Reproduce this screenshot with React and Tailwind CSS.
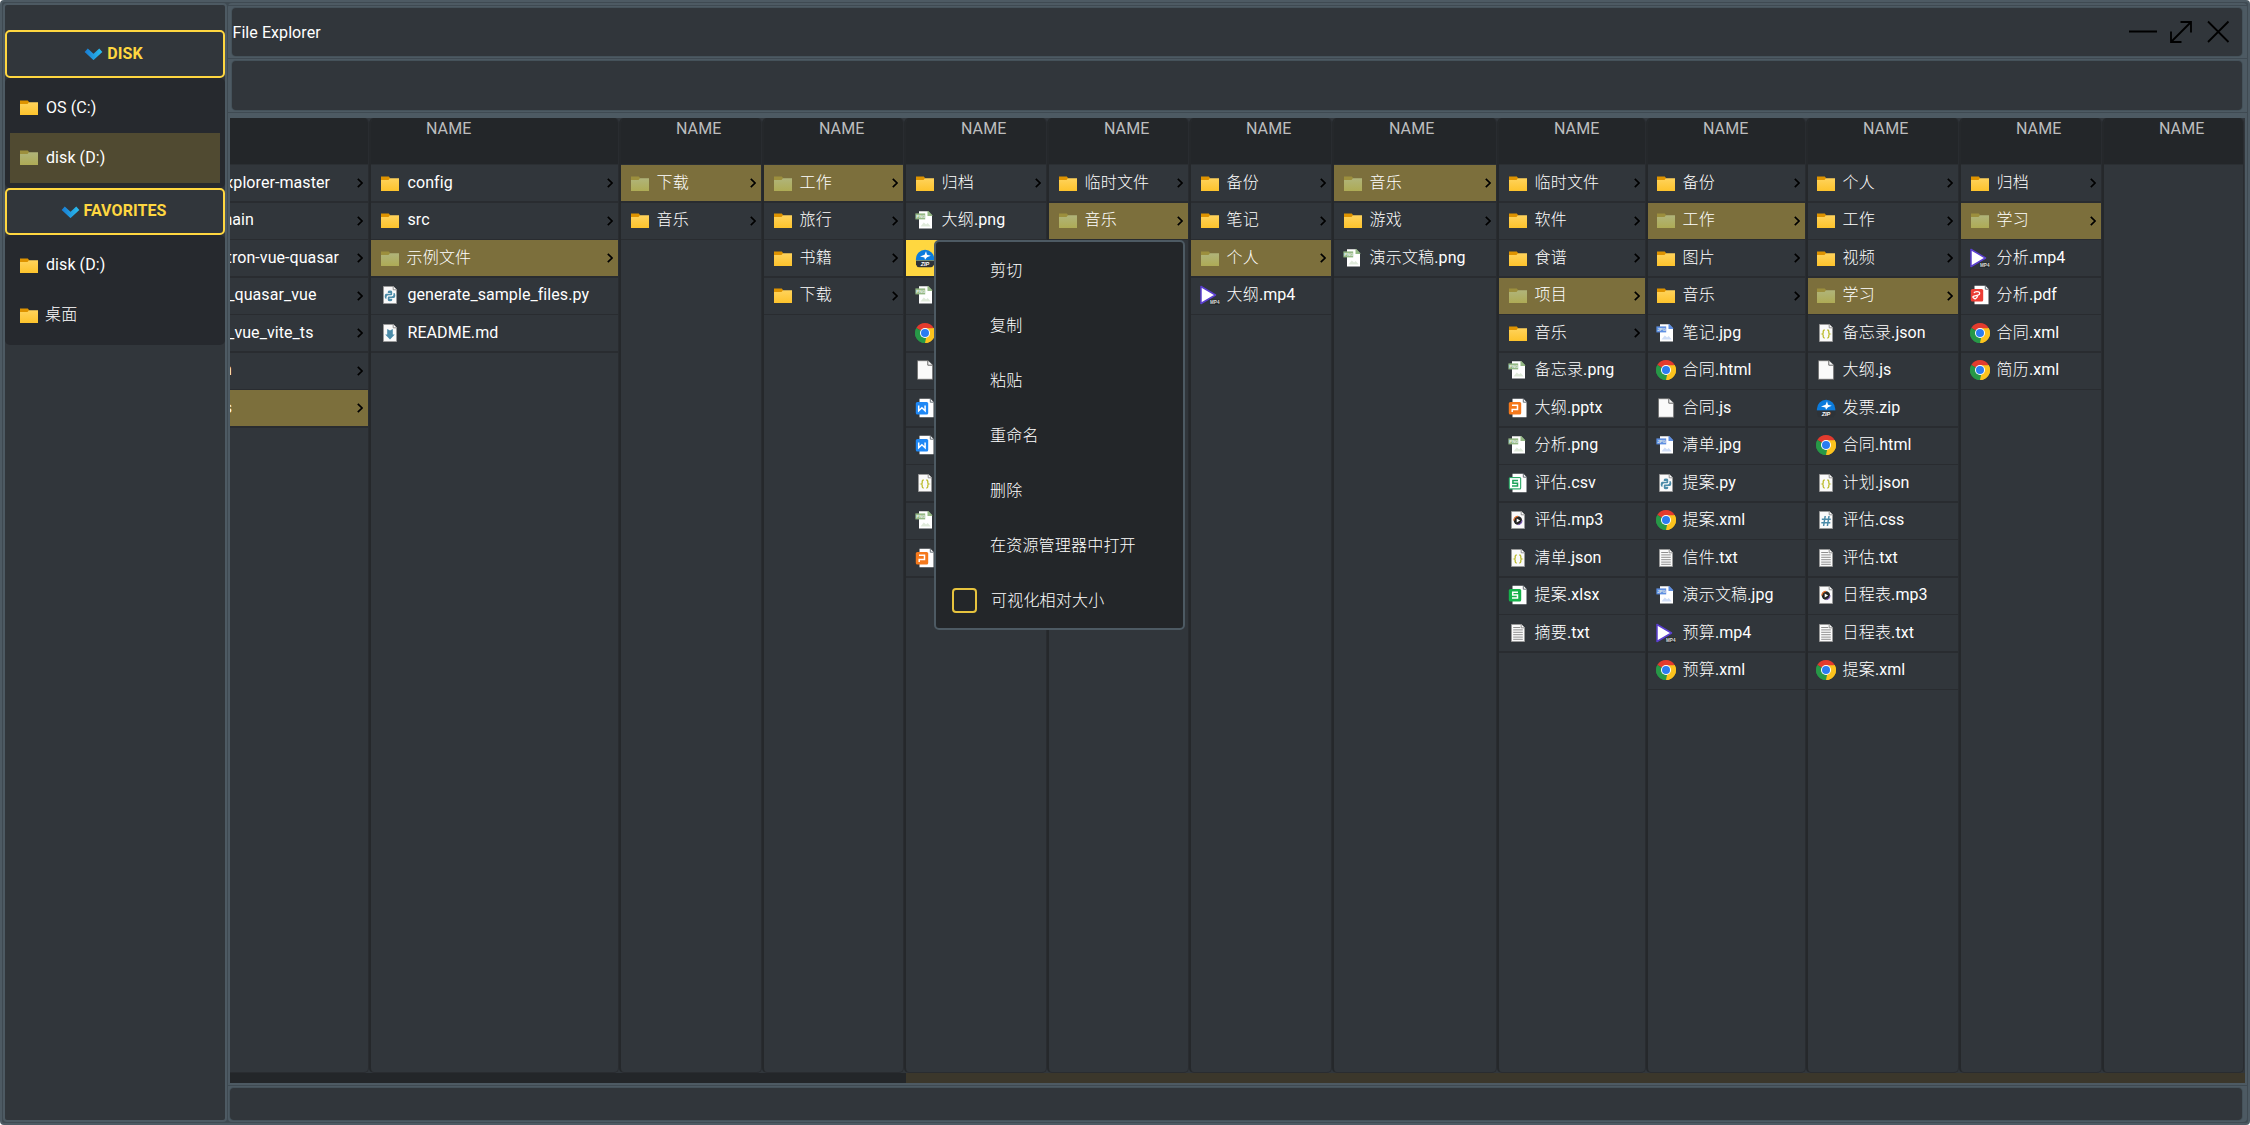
import React from "react";

const FOLDER = "dir";

/* w is the full width of each column, its borders included */
const COLUMNS = [
  { w: 250, rows: ["D:config", "D:src", "*D:示例文件", "py:generate_sample_files.py", "md:README.md"] },
  { w: 143, rows: ["*D:下载", "D:音乐"] },
  { w: 142, rows: ["*D:工作", "D:旅行", "D:书籍", "D:下载"] },
  { w: 143, rows: ["D:归档", "png:大纲.png", "!zip:", "png:", "chrome:", "js:", "doc:", "doc:", "json:", "png:", "ppt:"] },
  { w: 142, rows: ["D:临时文件", "*D:音乐"] },
  { w: 143, rows: ["D:备份", "D:笔记", "*D:个人", "mp4:大纲.mp4"] },
  { w: 165, rows: ["*D:音乐", "D:游戏", "png:演示文稿.png"] },
  {
    w: 149,
    rows: ["D:临时文件", "D:软件", "D:食谱", "*D:项目", "D:音乐", "png:备忘录.png", "ppt:大纲.pptx", "png:分析.png", "csv:评估.csv", "mp3:评估.mp3", "json:清单.json", "xls:提案.xlsx", "txt:摘要.txt"],
  },
  {
    w: 160,
    tight: true,
    rows: ["D:备份", "*D:工作", "D:图片", "D:音乐", "jpg:笔记.jpg", "chrome:合同.html", "js:合同.js", "jpg:清单.jpg", "py:提案.py", "chrome:提案.xml", "txt:信件.txt", "jpg:演示文稿.jpg", "mp4:预算.mp4", "chrome:预算.xml"],
  },
  {
    w: 153,
    tight: true,
    rows: ["D:个人", "D:工作", "D:视频", "*D:学习", "json:备忘录.json", "js:大纲.js", "zip:发票.zip", "chrome:合同.html", "json:计划.json", "css:评估.css", "txt:评估.txt", "mp3:日程表.mp3", "txt:日程表.txt", "chrome:提案.xml"],
  },
  { w: 143, rows: ["D:归档", "*D:学习", "mp4:分析.mp4", "pdf:分析.pdf", "chrome:合同.xml", "chrome:简历.xml"] },
  { w: 142, rows: [] },
];

/* the first column is scrolled partly out of view: [text, right edge of the text] */
const CLIPPED = [
  ["explorer-master", 100],
  ["main", 24],
  ["tron-vue-quasar", 109],
  ["_quasar_vue", 86.5],
  ["_vue_vite_ts", 83.5],
  ["n", 2],
  ["s", 2],
];

const MENU = ["剪切", "复制", "粘贴", "重命名", "删除", "在资源管理器中打开"];

function OfficePage({ color, children }) {
  return (
    <>
      <path d="M4.5.8h11l3 3.2v15.2h-14z" fill="#fff" />
      <path d="M15.3.8v3.4h3.2" fill="none" stroke="#59636b" strokeWidth="0.9" />
      <rect x=".8" y="4" width="12.4" height="12.4" rx="1.5" fill={color} />
      {children}
    </>
  );
}

function ImagePage({ main, label }) {
  return (
    <>
      <path d="M4 1.2h9l4 4.2v13H4z" fill="#fff" />
      <path d="M12.5 1h.8L17.2 5v1h-4.7z" fill={main} />
      <path d="M5.500 16.500l3.300-4 2.300 2 1.600-1.600 3 3.600z" fill={main} opacity=".3" />
      <rect x=".4" y="3.4" width="9.8" height="6" fill={main} />
      <text x="1.3" y="7.9" fontSize="4.3" fontFamily="Liberation Sans, sans-serif" fontWeight="bold" fill="#e8f0ea" letterSpacing="0">
        {label}
      </text>
    </>
  );
}

function SmallPage({ children }) {
  return (
    <>
      <path d="M3.500 1.500h10l3 3v14h-13z" fill="#fafafa" stroke="#9a9a9a" strokeWidth="0.9" />
      <path d="M13.200 1.500v3.300h3.300" fill="#fff" stroke="#777" strokeWidth="0.8" />
      {children}
    </>
  );
}

function Glyph({ type, dim }) {
  switch (type) {
    case FOLDER:
      return dim ? (
        <>
          <path d="M1 3.500h7.800L10 5v4H1z" fill="#9c8f3d" />
          <path d="M1 7h7.500l1.500-1.700h9V18H1z" fill="url(#folderDim)" />
        </>
      ) : (
        <>
          <path d="M1 3.500h7.800L10 5v4H1z" fill="#de9300" />
          <path d="M1 7h7.500l1.500-1.700h9V18H1z" fill="url(#folder)" />
        </>
      );
    case "png":
      return <ImagePage main="#94b884" label="PNG" />;
    case "jpg":
      return <ImagePage main="#5f8fe2" label="JPG" />;
    case "js":
      return (
        <>
          <path d="M2.500.700h10.500L17.600 5v14.300H2.500z" fill="#fafafa" stroke="#6f6f6f" strokeWidth="0.8" />
          <path d="M12.800.700v4.500h4.600" fill="#fafafa" stroke="#555" strokeWidth="0.9" />
        </>
      );
    case "json":
      return (
        <SmallPage>
          <path d="M8.700 7q-1.500 0-1.500 1.500v1.200q0 1-.9 1.300.9.300.9 1.300v1.200q0 1.500 1.500 1.500M11.300 7q1.500 0 1.500 1.500v1.200q0 1 .9 1.300-.9.300-.9 1.300v1.200q0 1.500-1.500 1.500" fill="none" stroke="#bcbc2e" strokeWidth="1.3" />
        </SmallPage>
      );
    case "py":
      return (
        <SmallPage>
          <path d="M7.800 6.700q0-1.200 2.200-1.200t2.200 1.200v2.600q0 1-1 1H8.500q-2 0-2 2v1.500H6q-1.300 0-1.300-2.400T6 8.700h4.500V8H7.800z" fill="#4b8ba8" />
          <path d="M12.200 15.100q0 1.200-2.200 1.200t-2.200-1.200v-2.600q0-1 1-1h2.700q2 0 2-2V8h.5q1.300 0 1.300 2.400t-1.300 2.700H9.500v.7h2.700z" fill="#4b8ba8" />
        </SmallPage>
      );
    case "md":
      return (
        <SmallPage>
          <path d="M7.200 6l2.800 1.500L12.800 6v5.500h2L10 16.500 5.200 11.500h2z" fill="#4b8ba8" />
        </SmallPage>
      );
    case "css":
      return (
        <SmallPage>
          <path d="M9.200 6l-1.600 10M13 6l-1.600 10M5.800 9.300h9M5.300 12.700h9" fill="none" stroke="#4b8ba8" strokeWidth="1.5" />
        </SmallPage>
      );
    case "txt":
      return (
        <SmallPage>
          <path d="M5.200 4.500h7M5.200 6.900h9.600M5.200 9.300h9.600M5.200 11.700h9.600M5.200 14.100h9.600M5.200 16.300h9.600" stroke="#8f8f8f" strokeWidth="1" />
        </SmallPage>
      );
    case "mp3":
      return (
        <SmallPage>
          <circle cx="9.9" cy="10.5" r="4.200" fill="#222" />
          <path d="M5.900 10.500a4 4 0 0 1 4-4.100" fill="none" stroke="#e8722c" strokeWidth="1.3" />
          <path d="M9.900 14.600a4 4 0 0 0 4-4.100" fill="none" stroke="#7b5bb5" strokeWidth="1.3" />
          <path d="M8.700 8.400l3.400 2.100-3.400 2.100z" fill="#fff" />
        </SmallPage>
      );
    case "chrome":
      return (
        <>
          <path d="M10 10L1.340 5A10 10 0 0 1 18.660 5z" fill="#e33b2e" />
          <path d="M10 10L18.660 5A10 10 0 0 1 10 20z" fill="#fcc31e" />
          <path d="M10 10V20A10 10 0 0 1 1.340 5z" fill="#279847" />
          <path d="M10 5.200h8.770A10 10 0 0 1 10 20l4.200-7.600z" fill="#fcc31e" />
          <path d="M1.340 5l4.500 7.400 5.200 2.500L10 20A10 10 0 0 1 1.340 5z" fill="#279847" />
          <circle cx="10" cy="10" r="5" fill="#fff" />
          <circle cx="10" cy="10" r="4" fill="#2b7cf0" />
        </>
      );
    case "zip":
      return (
        <>
          <path d="M.9 11a9.200 9.200 0 0 1 18.400 0v1.500H.9z" fill="#0b7bdc" />
          <path d="M11 3.200l1 3.600 3.800 1-3.800 1.400-2 2.600-.6-2.400L5 8.600l4.600-1.800z" fill="#fff" />
          <path d="M1 12.800h18.300v3.600q-1.500 2.600-3.500 2.800H4.500Q1.500 19 1 16.400z" fill="#2e3338" />
          <text x="10" y="18" textAnchor="middle" fontSize="5.6" fontStyle="italic" fontWeight="bold" fontFamily="Liberation Sans, sans-serif" fill="#fff" letterSpacing="0">
            ZIP
          </text>
        </>
      );
    case "mp4":
      return (
        <>
          <path d="M1 1.500v17L15.500 10z" fill="#fff" stroke="#5b3fd0" strokeWidth="1.5" strokeLinejoin="round" />
          <rect x="9.5" y="14.6" width="10.5" height="5" fill="#24282b" />
          <text x="10" y="18.9" fontSize="4.6" fontWeight="bold" fontFamily="Liberation Sans, sans-serif" fill="#ddd" letterSpacing="0">
            MP4
          </text>
        </>
      );
    case "doc":
      return (
        <OfficePage color="#1f88f5">
          <path d="M3.700 7.500v5.300l3.200-3 3.200 3V7.500" fill="none" stroke="#fff" strokeWidth="1.5" />
        </OfficePage>
      );
    case "ppt":
      return (
        <OfficePage color="#f5791c">
          <path d="M4.200 14v-2.600h5.300V7.200H4" fill="none" stroke="#fff" strokeWidth="1.5" />
        </OfficePage>
      );
    case "xls":
      return (
        <OfficePage color="#16b14b">
          <path d="M10 7.200H4.700v2.900h4.800v3H4" fill="none" stroke="#fff" strokeWidth="1.5" />
        </OfficePage>
      );
    case "csv":
      return (
        <OfficePage color="#2aa866">
          <rect x="1.9" y="5.1" width="10.2" height="10.2" fill="#fff" />
          <path d="M10 7.400H4.900v2.800h4.600V13H4" fill="none" stroke="#1ea45b" strokeWidth="1.5" />
        </OfficePage>
      );
    case "pdf":
      return (
        <OfficePage color="#ec3d35">
          <path d="M4 8q.5-1.300 3-1.300t2.700 1.500-1.700 2-4 .9-.3 2 3-.6l1-1.300" fill="none" stroke="#fff" strokeWidth="1.3" />
        </OfficePage>
      );
    default:
      return null;
  }
}

function Icon({ type, dim }) {
  return (
    <svg className="-mt-px h-5 w-5 shrink-0" viewBox="0 0 20 20">
      <Glyph type={type} dim={dim} />
    </svg>
  );
}

/* Han glyphs are drawn lighter and a little wider than the Latin ones */
function Label({ text }) {
  return (
    <span className="whitespace-nowrap">
      {text.split(/([\u4e00-\u9fff]+)/).map((part, i) =>
        i % 2 ? (
          <span key={i} className="-ml-px font-light tracking-[0.2px]">
            {part}
          </span>
        ) : (
          part
        )
      )}
    </span>
  );
}

function Chevron() {
  return (
    <svg className="mr-[5px] ml-auto h-[10px] w-[6px] shrink-0" viewBox="0 0 6 10">
      <path d="M.8.8L5 5 .8 9.200" fill="none" stroke="#000" strokeWidth="1.7" />
    </svg>
  );
}

function Row({ item, tight }) {
  const flag = item[0] === "*" || item[0] === "!" ? item[0] : "";
  const [kind, name] = item.slice(flag.length).split(":");
  const isDir = kind === "D";
  const bg = flag === "*" ? "bg-[#7c6f3c]" : flag === "!" ? "bg-[#ffd740]" : "bg-[#31363b]";
  return (
    <div className="h-[37.5px] bg-[#292c30]">
      <div className={`flex h-9 items-center ${tight ? "pl-2" : "pl-[9px]"} ${bg}`}>
        <Icon type={isDir ? FOLDER : kind} dim={flag === "*"} />
        <span className="-mt-px ml-[7.5px]">
          <Label text={name} />
        </span>
        {isDir && <Chevron />}
      </div>
    </div>
  );
}

function Column({ w, rows, tight }) {
  return (
    <div
      className="h-full shrink-0 overflow-hidden rounded-[5px] border-r border-b border-l-2 border-r-[#292c30] border-b-[#292c30] border-l-[#25282b] bg-[#31363b]"
      style={{ width: w }}
    >
      <div className="h-[47px] border-b border-[#2b2f33] bg-[#232629] pl-[55px]">
        <span className="block pt-px leading-[19px] text-[#bdbebf]">NAME</span>
      </div>
      {rows.map((r, i) => (
        <Row key={i} item={r} tight={tight} />
      ))}
    </div>
  );
}

function ClippedColumn() {
  return (
    <div className="h-full w-[139px] shrink-0 overflow-hidden rounded-r-[5px] border-r border-b border-[#292c30] bg-[#31363b]">
      <div className="h-[47px] border-b border-[#2b2f33] bg-[#232629]" />
      {CLIPPED.map(([text, end], i) => (
        <div key={i} className="h-[37.5px] bg-[#292c30]">
          <div className={`flex h-9 items-center ${i === 6 ? "bg-[#7c6f3c]" : "bg-[#31363b]"}`}>
            <span className="-mt-px flex shrink-0 justify-end whitespace-nowrap" style={{ width: end }}>
              {text}
            </span>
            <Chevron />
          </div>
        </div>
      ))}
    </div>
  );
}

function Section({ title, items }) {
  return (
    <>
      <div className="flex h-[47.5px] items-center justify-center gap-1 rounded-[5px] border-2 border-[#ffd740] bg-[#31363b] pr-[3px] text-[#ffd740]">
        <svg className="mt-px h-3 w-[19px]" viewBox="0 0 19 12">
          <path d="M2.200 2.300L9.500 9l7.300-6.700" fill="none" stroke="url(#check)" strokeWidth="4.6" />
        </svg>
        <span className="leading-5 font-bold">{title}</span>
      </div>
      <div className="h-[110px] rounded-[5px] bg-[#26292e] p-[5px]">
        {items.map(([name, active], i) => (
          <div key={i} className={`flex h-[50px] items-center pl-[9px] ${active ? "bg-[#504a31]" : ""}`}>
            <Icon type={FOLDER} dim={active} />
            <span className="ml-[7px]">
              <Label text={name} />
            </span>
          </div>
        ))}
      </div>
    </>
  );
}

export default function App() {
  return (
    <div className="flex h-[1125px] w-[2250px] gap-px overflow-hidden rounded-[4px] border-2 border-[#4d5a63] bg-[#3f4a52] p-px font-[Roboto,'Noto_Sans_CJK_SC',sans-serif] text-[16px] leading-5 tracking-[0.07px] text-white">
      <svg className="absolute h-0 w-0">
        <defs>
          <linearGradient id="folder" x1="0" y1="0" x2="0" y2="1">
            <stop offset="0" stopColor="#ffd35c" />
            <stop offset="1" stopColor="#fdc32c" />
          </linearGradient>
          <linearGradient id="folderDim" x1="0" y1="0" x2="0" y2="1">
            <stop offset="0" stopColor="#b0b47a" />
            <stop offset="1" stopColor="#aeab55" />
          </linearGradient>
          <linearGradient id="check" x1="0" y1="0" x2="1" y2="0">
            <stop offset="0" stopColor="#1a80d4" />
            <stop offset="1" stopColor="#29b9ec" />
          </linearGradient>
        </defs>
      </svg>

      <aside className="h-full w-[224px] shrink-0 rounded-[4px] border-2 border-[#4d5a63] bg-[#31363b] pt-[25px]">
        <Section title="DISK" items={[["OS (C:)", false], ["disk (D:)", true]]} />
        <Section title="FAVORITES" items={[["disk (D:)", false], ["桌面", false]]} />
      </aside>

      <main className="flex h-full min-w-0 flex-1 flex-col rounded-[4px] bg-[#4d5a63]">
        <div className="mb-[2px] h-[3px] shrink-0 border-b border-[#3f4a52]" />
        <header className="mr-[5px] ml-1 flex h-12 shrink-0 items-center rounded-[4px] bg-[#31363b] ring-1 ring-[#45525a]">
          <span className="mt-[2px] ml-[0.5px]">File Explorer</span>
          <div className="mr-3 ml-auto flex items-center gap-3">
            <svg className="h-6 w-7" viewBox="0 0 28 24">
              <path d="M0 11.500h28" stroke="#000" strokeWidth="2" />
            </svg>
            <svg className="h-6 w-6" viewBox="0 0 24 24">
              <path d="M2 22L22 2M11.500 2H22v10.500M2 11.500V22h10.500" fill="none" stroke="#000" strokeWidth="1.8" />
            </svg>
            <svg className="ml-px h-6 w-6" viewBox="0 0 24 24">
              <path d="M2 1.500l20.500 20.500M22.500 1.500L2 22" fill="none" stroke="#000" strokeWidth="1.8" />
            </svg>
          </div>
        </header>
        <div className="mt-[2px] mb-[2px] h-px shrink-0 bg-[#3f4a52]" />
        <div className="mr-[5px] ml-1 h-[49px] shrink-0 rounded-[4px] bg-[#31363b] ring-1 ring-[#45525a]" />
        <div className="mt-[2px] mb-[5px] h-px shrink-0 bg-[#3f4a52]" />

        <section className="mr-[2px] ml-[2px] h-[965px] shrink-0 overflow-hidden bg-[#31363b]">
          <div className="flex h-[955px] items-stretch">
            <ClippedColumn />
            {COLUMNS.map((c, i) => (
              <Column key={i} {...c} />
            ))}
          </div>
          <div className="flex h-[10px] bg-[#232629]">
            <div className="ml-[676px] flex-1 bg-[#3b372b]" />
          </div>
        </section>

        <div className="mt-[2px] mb-[2px] h-px shrink-0 bg-[#3f4a52]" />
        <footer className="mr-[5px] ml-[2px] h-8 shrink-0 rounded-[4px] bg-[#31363b] ring-1 ring-[#45525a]" />
      </main>

      <div className="absolute top-[240px] left-[934px] h-[390px] w-[251px] rounded-[5px] border-2 border-[#4d5a63] bg-[#232629] pt-px">
        {MENU.map((m) => (
          <div key={m} className="flex h-[55px] items-center pl-[55px]">
            <Label text={m} />
          </div>
        ))}
        <div className="flex h-[55px] items-center pl-4">
          <span className="mr-[15px] h-[25px] w-[25px] rounded-[4px] border-2 border-[#e6c33e]" />
          <Label text="可视化相对大小" />
        </div>
      </div>
    </div>
  );
}
